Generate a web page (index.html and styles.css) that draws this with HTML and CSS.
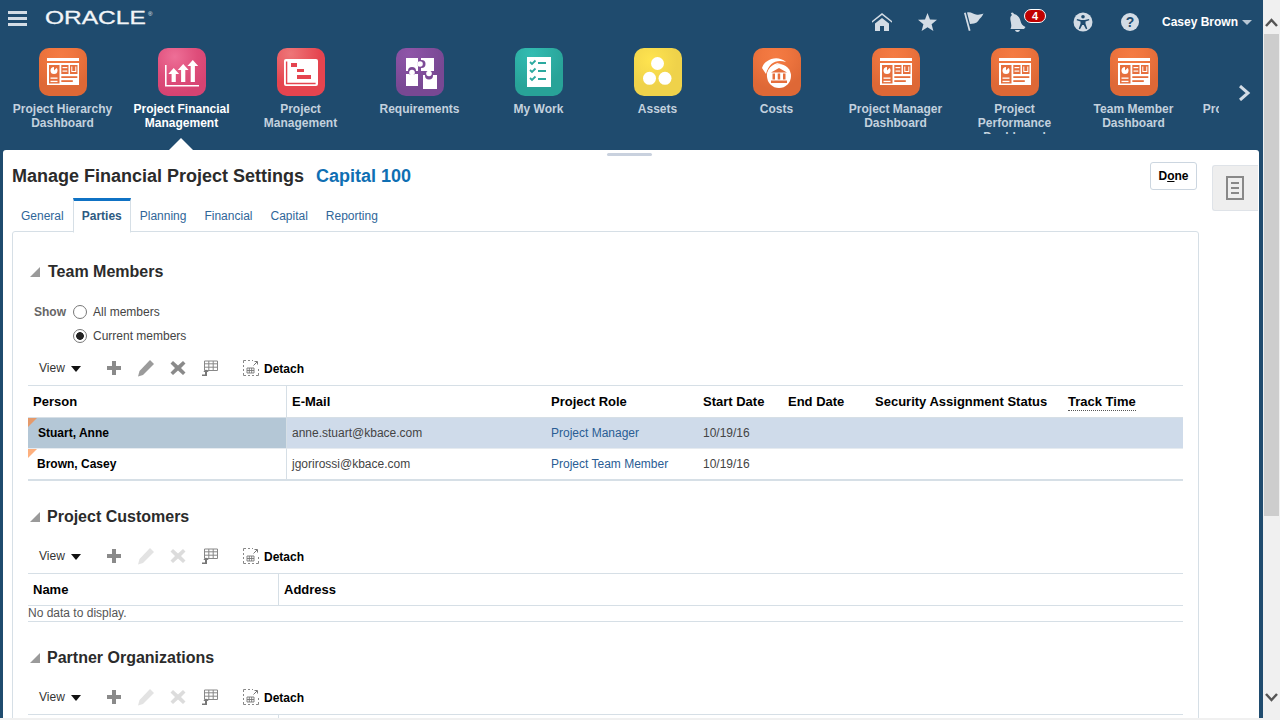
FILE: index.html

```html
<!DOCTYPE html>
<html lang="en">
<head>
  <meta charset="UTF-8" />
  <meta name="viewport" content="width=device-width, initial-scale=1" />
  <title>Manage Financial Project Settings</title>
  <link rel="stylesheet" href="styles.css">
</head>
<body>
  <svg class="defs" width="0" height="0">
    <symbol id="g-dash" viewBox="0 0 48 48">
      <rect x="8" y="10" width="32" height="3" fill="#fff"/>
      <rect x="8" y="15" width="32" height="22" fill="#fff"/>
      <rect x="10" y="17" width="10.5" height="18.5" fill="#e66f3d"/>
      <circle cx="15" cy="22.5" r="3.5" fill="#fff"/>
      <path d="M15 22.5V19h3.5z" fill="#e66f3d"/>
      <rect x="11.5" y="29.5" width="7" height="1.3" fill="#fff"/>
      <rect x="11.5" y="32.8" width="7" height="1.3" fill="#fff"/>
      <rect x="22.3" y="17" width="7.2" height="9" fill="#e66f3d"/>
      <rect x="23.5" y="19" width="4.8" height="1.2" fill="#fff"/>
      <rect x="23.5" y="22.5" width="4.8" height="1.2" fill="#fff"/>
      <rect x="31" y="17" width="7.5" height="9" fill="#e66f3d"/>
      <path d="M32.3 18.5v5.5h5v-5.5h-1v4.4h-3v-4.4z" fill="#fff"/>
      <rect x="22.3" y="28.2" width="16" height="1.8" fill="#e66f3d"/>
      <rect x="22.3" y="32.2" width="11.5" height="1.8" fill="#e66f3d"/>
    </symbol>
    <symbol id="g-fin" viewBox="0 0 48 48">
      <path d="M7 17h1.6v20H41v1.6H7z" fill="#fff"/>
      <path d="M15.7 20l5.4 6h-3.3v8h-4.2v-8h-3.3z" fill="#fff"/>
      <path d="M25.2 16l5.4 6h-3.3v12h-4.2V22h-3.3z" fill="#fff"/>
      <path d="M34.8 12l5.4 6h-3.3v16h-4.2V18h-3.3z" fill="#fff"/>
    </symbol>
    <symbol id="g-gantt" viewBox="0 0 48 48">
      <rect x="7" y="11" width="34" height="27" rx="2" fill="#fff"/>
      <path d="M9.6 13.5v22h29" fill="none" stroke="#e5444f" stroke-width="1.4"/>
      <rect x="14" y="15" width="6" height="4" fill="#e5444f"/>
      <rect x="20" y="21" width="7" height="3" fill="#e5444f"/>
      <rect x="20" y="27" width="14" height="4" fill="#e5444f"/>
    </symbol>
    <symbol id="g-puzzle" viewBox="0 0 48 48">
      <rect x="10" y="10" width="12" height="13" fill="#fff"/>
      <rect x="25" y="10" width="13" height="13" fill="#fff"/>
      <rect x="10" y="26" width="12" height="12" fill="#fff"/>
      <rect x="27" y="27" width="14" height="14" fill="#fff"/>
      <circle cx="25.500" cy="16" r="4" fill="#7c4a96"/>
      <circle cx="24" cy="16" r="2.800" fill="#fff"/>
      <circle cx="16" cy="23" r="4" fill="#7c4a96"/>
      <circle cx="16" cy="24.500" r="2.800" fill="#fff"/>
      <circle cx="33" cy="27.500" r="4" fill="#7c4a96"/>
      <circle cx="33" cy="25.500" r="2.800" fill="#fff"/>
    </symbol>
    <symbol id="g-work" viewBox="0 0 48 48">
      <rect x="12" y="9" width="24" height="30" fill="#fff"/>
      <path d="M15 14l2 2 3.500-3.500M15 22l2 2 3.500-3.500M15 30l2 2 3.500-3.500" fill="none" stroke="#2ba99f" stroke-width="1.8"/>
      <path d="M23 15h8M23 23h8M23 31h8" stroke="#2ba99f" stroke-width="1.800"/>
    </symbol>
    <symbol id="g-assets" viewBox="0 0 48 48">
      <circle cx="23.500" cy="15.500" r="6.500" fill="#fff"/>
      <circle cx="15.500" cy="30.300" r="6.500" fill="#fff"/>
      <circle cx="31" cy="30.300" r="6.500" fill="#fff"/>
    </symbol>
    <symbol id="g-costs" viewBox="0 0 48 48">
      <path d="M9 20C11 12 24 6 33 14 24 11 16 14 13 26z" fill="#fff"/>
      <path d="M14 29C13 22 20 14 28 15c-6 1-9 5-10 11z" fill="#fff"/>
      <circle cx="26" cy="28" r="12" fill="#fff"/>
      <path d="M26 20l8 4.500H18zM19.500 25.500h2.500v6h-2.500zM24.700 25.500h2.500v6h-2.500zM30 25.500h2.500v6H30zM18 32.500h16V35H18z" fill="#e66f3d"/>
    </symbol>
    <symbol id="t-freeze" viewBox="0 0 16 16">
      <path d="M2.500 1h13v9.500h-13zM2.500 3.800h13M2.500 7.200h13M6.800 1v9.500M11.200 1v9.500" fill="none" stroke="#888" stroke-width="1"/>
      <path d="M0 16v-1.500h3V12H1.200L4 9.500 6.800 12H5v4z" fill="#777"/>
    </symbol>
    <symbol id="t-detach" viewBox="0 0 16 16">
      <path d="M.5 3V.5H3M5 .5h2M.5 5v2M.5 9v2M.5 13v2.500H3M5 15.500h2M9 15.500h2M13 15.500h2.500V13M15.500 11V9M9 .5h1" fill="none" stroke="#888" stroke-width="1"/>
      <path d="M4 8h7v5H4zM4 10.500h7M6.300 8v5M8.700 8v5" fill="none" stroke="#777" stroke-width=".9"/>
      <path d="M10.500 5.500L14 2M11.500 1.500H14.500V4.500" fill="none" stroke="#777" stroke-width="1"/>
    </symbol>
  </svg>

  <div class="app">
    <header class="header">
      <div class="topbar">
        <div class="burger"><span></span><span></span><span></span></div>
        <div class="logo"><span class="logo-text">ORACLE</span><span class="logo-r">®</span></div>
        <div class="global">
          <span class="slot">
            <svg width="20" height="18" viewBox="0 0 20 18"><path d="M10 0L0 8v1.800L10 2l10 7.800V8z" fill="#d3dce5"/><path d="M3 10.500L10 5l7 5.500V18h-5v-5H8v5H3z" fill="#d3dce5"/></svg>
          </span>
          <span class="slot">
            <svg width="19" height="18" viewBox="0 0 19 18"><path d="M9.500 0l2.500 6.400 7 .4-5.400 4.400 1.800 6.800-5.900-3.800L3.600 18l1.800-6.800L0 6.800l7-.4z" fill="#d3dce5"/></svg>
          </span>
          <span class="slot">
            <svg width="20" height="19" viewBox="0 0 20 19"><path d="M0 1L1.700.5 6.500 18.500l-1.700.5z" fill="#d3dce5"/><path d="M3 .5C7-.5 9 2 12 2.500c3 .5 5 0 7.500-1C18 5 16 6 14.500 8.500 13.500 10 12 11 10 11.500L6 12z" fill="#d3dce5"/></svg>
          </span>
          <span class="slot slot-bell">
            <svg width="17" height="20" viewBox="0 0 17 20"><path d="M2 1a2 2 0 0 1 3 1c4 1 6 4 6.500 7 .5 3 2.500 5 5 6L15 17H1.500C3 14 2 11 1.500 8.500 1 6 1.500 4 3 3 2.500 2.500 2 2 2 1z" fill="#d3dce5"/><path d="M6 18h5c-.3 1.300-1.300 2-2.500 2S6.300 19.300 6 18z" fill="#d3dce5"/></svg>
            <span class="badge">4</span>
          </span>
          <span class="slot slot-gap">
            <svg width="20" height="20" viewBox="0 0 20 20"><circle cx="10" cy="10" r="9.500" fill="#d3dce5"/><circle cx="10" cy="4.800" r="1.800" fill="#1f4b6e"/><path d="M4 7l4.200.9h3.600L16 7l.3 1.300-3.800 1.200v2.300l1.800 5-1.300.5L10.800 13h-1.600l-2.200 4.300-1.300-.5 1.800-5V9.500L3.700 8.300z" fill="#1f4b6e"/></svg>
          </span>
          <span class="slot">
            <span class="help">?</span>
          </span>
          <span class="user">Casey Brown</span>
          <span class="caret"></span>
        </div>
      </div>

      <div class="springboard">
        <div class="strip">
          <div class="app-item">
            <span class="tile tile-orange"><svg class="glyph"><use href="#g-dash"/></svg></span>
            <span class="app-label">Project Hierarchy Dashboard</span>
          </div>
          <div class="app-item active">
            <span class="tile tile-pink"><svg class="glyph"><use href="#g-fin"/></svg></span>
            <span class="app-label">Project Financial Management</span>
          </div>
          <div class="app-item">
            <span class="tile tile-red"><svg class="glyph"><use href="#g-gantt"/></svg></span>
            <span class="app-label">Project Management</span>
          </div>
          <div class="app-item">
            <span class="tile tile-purple"><svg class="glyph"><use href="#g-puzzle"/></svg></span>
            <span class="app-label">Requirements</span>
          </div>
          <div class="app-item">
            <span class="tile tile-teal"><svg class="glyph"><use href="#g-work"/></svg></span>
            <span class="app-label">My Work</span>
          </div>
          <div class="app-item">
            <span class="tile tile-yellow"><svg class="glyph"><use href="#g-assets"/></svg></span>
            <span class="app-label">Assets</span>
          </div>
          <div class="app-item">
            <span class="tile tile-orange"><svg class="glyph"><use href="#g-costs"/></svg></span>
            <span class="app-label">Costs</span>
          </div>
          <div class="app-item">
            <span class="tile tile-orange"><svg class="glyph"><use href="#g-dash"/></svg></span>
            <span class="app-label">Project Manager Dashboard</span>
          </div>
          <div class="app-item">
            <span class="tile tile-orange"><svg class="glyph"><use href="#g-dash"/></svg></span>
            <span class="app-label">Project Performance Dashboard</span>
          </div>
          <div class="app-item">
            <span class="tile tile-orange"><svg class="glyph"><use href="#g-dash"/></svg></span>
            <span class="app-label">Team Member Dashboard</span>
          </div>
          <div class="app-item">
            <span class="tile tile-orange"><svg class="glyph"><use href="#g-dash"/></svg></span>
            <span class="app-label">Project Hierarchy Dashboard</span>
          </div>
        </div>
        <div class="next">
          <svg width="13" height="16" viewBox="0 0 13 16"><path d="M2 1l8 7-8 7" fill="none" stroke="#d3dce5" stroke-width="3"/></svg>
        </div>
      </div>
    </header>

    <main class="panel">
      <div class="grip"></div>
      <div class="content">
        <div class="page-head">
          <h1 class="page-title">Manage Financial Project Settings</h1>
          <span class="page-sub">Capital 100</span>
          <button class="done">D<u>o</u>ne</button>
        </div>

        <nav class="tabs">
          <a class="tab">General</a>
          <a class="tab current">Parties</a>
          <a class="tab">Planning</a>
          <a class="tab">Financial</a>
          <a class="tab">Capital</a>
          <a class="tab">Reporting</a>
        </nav>

        <div class="tab-box">
          <h2 class="section-title"><span class="disclosure"></span>Team Members</h2>

          <div class="show-row">
            <span class="show-label">Show</span>
            <span class="radio"></span>
            <span>All members</span>
          </div>
          <div class="show-row">
            <span class="show-label"></span>
            <span class="radio checked"></span>
            <span>Current members</span>
          </div>

          <div class="toolbar toolbar-first">
            <span class="view">View</span><span class="view-arrow"></span>
            <span class="tool"><svg width="16" height="16" viewBox="0 0 16 16"><path d="M6 1h4v5h5v4h-5v5H6v-5H1V6h5z" fill="#8a8a8a"/></svg></span>
            <span class="tool"><svg width="18" height="18" viewBox="0 0 18 18"><path d="M13 1l4 4L6 16l-5 1.500L2.500 12z" fill="#9b9b9b"/></svg></span>
            <span class="tool"><svg width="16" height="16" viewBox="0 0 16 16"><path d="M3 1l5 4.500L13 1l2.500 2.500L11 8l4.500 4.500L13 15l-5-4.500L3 15 .5 12.500 5 8 .5 3.500z" fill="#8a8a8a"/></svg></span>
            <span class="tool"><svg width="16" height="16"><use href="#t-freeze"/></svg></span>
            <svg class="detach-icon" width="16" height="16"><use href="#t-detach"/></svg>
            <span class="detach">Detach</span>
          </div>

          <table class="grid">
            <colgroup>
              <col class="c-person"><col class="c-mail"><col class="c-role"><col class="c-start"><col class="c-end"><col class="c-sec"><col>
            </colgroup>
            <thead>
              <tr>
                <th class="sep">Person</th><th>E-Mail</th><th>Project Role</th><th>Start Date</th><th>End Date</th><th>Security Assignment Status</th><th><span class="dotted">Track Time</span></th>
              </tr>
            </thead>
            <tbody>
              <tr class="selected">
                <td class="person sep"><span class="corner"></span>Stuart, Anne</td><td>anne.stuart@kbace.com</td><td><a class="role">Project Manager</a></td><td>10/19/16</td><td></td><td></td><td></td>
              </tr>
              <tr class="last">
                <td class="person sep"><span class="corner"></span>Brown, Casey</td><td>jgorirossi@kbace.com</td><td><a class="role">Project Team Member</a></td><td>10/19/16</td><td></td><td></td><td></td>
              </tr>
            </tbody>
          </table>

          <h2 class="section-title after-table title-p"><span class="disclosure"></span>Project Customers</h2>
          <div class="toolbar">
            <span class="view">View</span><span class="view-arrow"></span>
            <span class="tool"><svg width="16" height="16" viewBox="0 0 16 16"><path d="M6 1h4v5h5v4h-5v5H6v-5H1V6h5z" fill="#8a8a8a"/></svg></span>
            <span class="tool"><svg width="18" height="18" viewBox="0 0 18 18"><path d="M13 1l4 4L6 16l-5 1.500L2.500 12z" fill="#e3e3e3"/></svg></span>
            <span class="tool"><svg width="16" height="16" viewBox="0 0 16 16"><path d="M3 1l5 4.500L13 1l2.500 2.500L11 8l4.500 4.500L13 15l-5-4.500L3 15 .5 12.500 5 8 .5 3.500z" fill="#dcdcdc"/></svg></span>
            <span class="tool"><svg width="16" height="16"><use href="#t-freeze"/></svg></span>
            <svg class="detach-icon" width="16" height="16"><use href="#t-detach"/></svg>
            <span class="detach">Detach</span>
          </div>
          <table class="grid">
            <colgroup><col class="c-name"><col></colgroup>
            <thead><tr><th class="sep">Name</th><th>Address</th></tr></thead>
            <tbody><tr><td class="empty" colspan="2">No data to display.</td></tr></tbody>
          </table>

          <h2 class="section-title after-table title-p"><span class="disclosure"></span>Partner Organizations</h2>
          <div class="toolbar">
            <span class="view">View</span><span class="view-arrow"></span>
            <span class="tool"><svg width="16" height="16" viewBox="0 0 16 16"><path d="M6 1h4v5h5v4h-5v5H6v-5H1V6h5z" fill="#8a8a8a"/></svg></span>
            <span class="tool"><svg width="18" height="18" viewBox="0 0 18 18"><path d="M13 1l4 4L6 16l-5 1.500L2.500 12z" fill="#e3e3e3"/></svg></span>
            <span class="tool"><svg width="16" height="16" viewBox="0 0 16 16"><path d="M3 1l5 4.500L13 1l2.500 2.500L11 8l4.500 4.500L13 15l-5-4.500L3 15 .5 12.500 5 8 .5 3.500z" fill="#dcdcdc"/></svg></span>
            <span class="tool"><svg width="16" height="16"><use href="#t-freeze"/></svg></span>
            <svg class="detach-icon" width="16" height="16"><use href="#t-detach"/></svg>
            <span class="detach">Detach</span>
          </div>
          <table class="grid">
            <colgroup><col class="c-name"><col></colgroup>
            <thead><tr><th class="sep"></th><th></th></tr></thead>
          </table>
        </div>
      </div>

      <aside class="side">
        <div class="side-tab">
          <svg width="18" height="24" viewBox="0 0 18 24"><path d="M1 1h16v22H1z" fill="none" stroke="#888" stroke-width="2"/><path d="M5 7h8M5 12h8M5 17h8" stroke="#888" stroke-width="2"/></svg>
        </div>
      </aside>
    </main>
  </div>

  <div class="scrollbar">
    <div class="scroll-btn scroll-up"><svg width="13" height="9" viewBox="0 0 13 9"><path d="M1 8l5.500-6L12 8" fill="none" stroke="#555" stroke-width="2.500"/></svg></div>
    <div class="scroll-thumb"></div>
    <div class="scroll-rest"></div>
    <div class="scroll-btn"><svg width="13" height="9" viewBox="0 0 13 9"><path d="M1 1l5.500 6L12 1" fill="none" stroke="#555" stroke-width="2.500"/></svg></div>
  </div>
</body>
</html>
```

FILE: styles.css

```css
html, body {
  height: 100%;
}
body {
  margin: 0;
  display: flex;
  height: 720px;
  overflow: hidden;
  background-color: #f0f0f0;
  font-family: "Liberation Sans", Arial, sans-serif;
  font-size: 12px;
  color: #444;
}
.defs {
  position: absolute;
}

.app {
  width: 1263px;
  height: 718px;
  flex: none;
  display: flex;
  flex-direction: column;
  background-color: #1f4b6e;
}

/* header */
.header {
  height: 150px;
  flex: none;
}
.topbar {
  height: 40px;
  display: flex;
  align-items: center;
  padding: 0 11px 0 8px;
  box-sizing: border-box;
}
.burger {
  display: flex;
  flex-direction: column;
  gap: 3px;
  width: 19px;
  margin-top: -4px;
}
.burger span {
  height: 3px;
  background-color: #d3dce5;
}
.logo {
  width: 110px;
  margin-left: 18px;
  margin-top: -5px;
  display: flex;
  color: #f2f5f8;
}
.logo-text {
  display: inline-block;
  width: 103px;
  font-size: 19px;
  line-height: 18px;
  -webkit-text-stroke: 0.3px #f2f5f8;
  transform: scaleX(1.29);
  transform-origin: left center;
}
.logo-r {
  font-size: 6px;
  line-height: 10px;
}
.global {
  margin-left: auto;
  display: flex;
  align-items: center;
}
.slot {
  position: relative;
  width: 46px;
  height: 40px;
  display: flex;
  align-items: center;
  justify-content: center;
  margin-top: 3px;
}
.slot-gap {
  margin-left: 18px;
}
.slot-gap svg {
  margin-left: -2px;
}
.slot-bell svg {
  margin-left: -4px;
}
.badge {
  position: absolute;
  left: 27px;
  top: 7px;
  width: 22px;
  height: 14px;
  box-sizing: border-box;
  border: 1px solid #fff;
  border-radius: 7px;
  background-color: #c00000;
  color: #fff;
  font-size: 11px;
  font-weight: bold;
  line-height: 12px;
  text-align: center;
}
.help {
  width: 18px;
  height: 18px;
  border-radius: 50%;
  background-color: #d3dce5;
  color: #1f4b6e;
  font-size: 14px;
  font-weight: bold;
  line-height: 18px;
  text-align: center;
}
.user {
  margin-left: 9px;
  color: #fff;
  font-weight: bold;
  margin-top: 3px;
}
.caret {
  width: 0;
  height: 0;
  margin: 4px 0 0 4px;
  border-left: 5px solid transparent;
  border-right: 5px solid transparent;
  border-top: 5px solid #b9c7d4;
}

/* app icons */
.springboard {
  display: flex;
  margin-top: 8px;
  height: 102px;
}
.strip {
  width: 1219px;
  flex: none;
  display: flex;
  padding-left: 3px;
  box-sizing: border-box;
  overflow: hidden;
}
.app-item {
  position: relative;
  width: 119px;
  flex: none;
  display: flex;
  flex-direction: column;
  align-items: center;
  height: 102px;
}
.tile {
  width: 48px;
  height: 48px;
  flex: none;
  border-radius: 10px;
  margin-bottom: 6px;
}
.glyph {
  display: block;
  width: 48px;
  height: 48px;
}
.tile-orange {
  background: radial-gradient(circle at 45% 15%, #f47b43 0, #f0763f 25%, #de6836 70%);
}
.tile-pink {
  background: radial-gradient(circle at 35% 18%, #ee6f97 0, #de4d7a 45%, #d64372 75%);
}
.tile-red {
  background: radial-gradient(circle at 28% 12%, #ee7678 0, #e5444f 55%);
}
.tile-purple {
  background: radial-gradient(circle at 28% 12%, #8f55a8 0, #784893 65%);
}
.tile-teal {
  background: radial-gradient(circle at 35% 12%, #33bcb2 0, #28a398 65%);
}
.tile-yellow {
  background: radial-gradient(circle at 35% 25%, #ffe44f 0, #efd24a 55%);
}
.app-label {
  display: block;
  width: 111px;
  height: 32px;
  overflow: hidden;
  color: #c3d1de;
  font-weight: bold;
  line-height: 14px;
  text-align: center;
}
.active .app-label {
  color: #fff;
}
.active::after {
  content: "";
  position: absolute;
  left: 47px;
  bottom: 0;
  width: 0;
  height: 0;
  border-left: 12px solid transparent;
  border-right: 12px solid transparent;
  border-bottom: 12px solid #fff;
}
.next {
  flex: 1;
  display: flex;
  justify-content: center;
  padding-top: 37px;
  padding-left: 7px;
  box-sizing: border-box;
}

/* main panel */
.panel {
  position: relative;
  flex: 1;
  min-height: 0;
  margin: 0 4px 0 3px;
  display: flex;
  overflow: hidden;
  background-color: #fff;
  border-radius: 3px 3px 0 0;
}
.grip {
  position: absolute;
  left: 604px;
  top: 3px;
  width: 45px;
  height: 3px;
  border-radius: 2px;
  background-color: #c9d1de;
}
.content {
  width: 1196px;
  flex: none;
  padding: 12px 0 0 9px;
  box-sizing: border-box;
}
.page-head {
  display: flex;
  align-items: center;
  height: 28px;
  padding-right: 2px;
}
.page-title {
  margin: 0;
  font-size: 18px;
  font-weight: bold;
  color: #2b2b2b;
}
.page-sub {
  margin-left: 12px;
  font-size: 18px;
  font-weight: bold;
  color: #0f6fb3;
}
.done {
  margin-left: auto;
  width: 47px;
  height: 28px;
  padding: 0;
  border: 1px solid #ccd6e0;
  border-radius: 3px;
  background-color: #fff;
  color: #000;
  font-family: inherit;
  font-size: 12px;
  font-weight: bold;
}
.tabs {
  display: flex;
  height: 33px;
  margin-top: 8px;
}
.tab {
  padding: 4px 9px 0;
  line-height: 29px;
  color: #2f6699;
}
.current {
  position: relative;
  z-index: 1;
  height: 30px;
  padding: 1px 8px 0;
  border: 1px solid #d6dfe6;
  border-top: 3px solid #0f72c4;
  border-bottom: 1px solid #fff;
  background-color: #fff;
  font-weight: bold;
  color: #2d5a82;
}
.tab-box {
  position: relative;
  height: 600px;
  padding: 30px 15px 0;
  border: 1px solid #d6dfe6;
  border-radius: 3px;
}
.section-title {
  display: flex;
  align-items: center;
  height: 20px;
  margin: 0;
  font-size: 16px;
  font-weight: bold;
  color: #2b2b2b;
}
.after-table {
  margin-top: 26px;
}
.title-p .disclosure {
  margin-right: 7px;
}
.disclosure {
  width: 0;
  height: 0;
  margin: 0 8px 0 2px;
  border-left: 10px solid transparent;
  border-bottom: 10px solid #9a9a9a;
}
.show-row {
  display: flex;
  align-items: center;
  height: 24px;
  padding-left: 6px;
}
.section-title + .show-row {
  margin-top: 18px;
}
.show-label {
  width: 39px;
  font-weight: bold;
  color: #666;
}
.radio {
  width: 14px;
  height: 14px;
  margin-right: 6px;
  box-sizing: border-box;
  border: 1px solid #777;
  border-radius: 50%;
  background-color: #fff;
}
.checked {
  background: radial-gradient(circle, #222 0, #222 3.5px, #fff 4.2px);
}
.toolbar {
  display: flex;
  align-items: center;
  height: 34px;
  margin-top: 12px;
  padding-left: 11px;
  color: #333;
}
.toolbar-first {
  margin-top: 3px;
}
.view {
  width: 27px;
}
.view-arrow {
  width: 0;
  height: 0;
  margin: 2px 17px 0 5px;
  border-left: 5px solid transparent;
  border-right: 5px solid transparent;
  border-top: 6px solid #111;
}
.tool {
  width: 32px;
  display: flex;
  justify-content: center;
}
.detach-icon {
  margin-left: 17px;
}
.detach {
  margin: 1px 0 0 5px;
  font-weight: bold;
  color: #000;
}

/* tables */
.grid {
  width: 1155px;
  table-layout: fixed;
  border-collapse: separate;
  border-spacing: 0;
  border-top: 1px solid #d6dfe6;
}
.c-person, .c-mail {
  width: 259px;
}
.c-role {
  width: 152px;
}
.c-start {
  width: 85px;
}
.c-end {
  width: 87px;
}
.c-sec {
  width: 193px;
}
.c-name {
  width: 251px;
}
.grid th {
  height: 31px;
  padding: 0 5px;
  border-bottom: 1px solid #d6dfe6;
  text-align: left;
  font-size: 13px;
  font-weight: bold;
  color: #000;
  white-space: nowrap;
}
.grid th.sep, .grid td.sep {
  border-right: 1px solid #d6dfe6;
}
.grid td {
  height: 30px;
  padding: 0 5px;
  border-bottom: 1px solid #e6ebf0;
  white-space: nowrap;
}
.grid .last td {
  border-bottom: 2px solid #d6dfe6;
}
.selected td {
  background-color: #cfdbea;
}
.grid .selected .person {
  background-color: #b4c7d6;
}
.grid .person {
  position: relative;
  padding-left: 10px;
  font-weight: bold;
  color: #000;
}
.grid .last .person {
  padding-left: 9px;
}
.corner {
  position: absolute;
  left: 0;
  top: 0;
  width: 0;
  height: 0;
  border-top: 9px solid #fdb07e;
  border-right: 9px solid transparent;
}
.selected .corner {
  border-top-color: #e59a6b;
}
.role {
  color: #2a5d94;
}
.dotted {
  padding-bottom: 1px;
  border-bottom: 1px dotted #555;
}
.grid .empty {
  height: 15px;
  padding: 0;
  border-bottom: 1px solid #d6dfe6;
  font-size: 12px;
  line-height: 13px;
  color: #555;
}

/* side tab */
.side {
  flex: 1;
  padding: 15px 1px 0 13px;
}
.side-tab {
  height: 46px;
  display: flex;
  align-items: center;
  justify-content: center;
  box-sizing: border-box;
  padding-right: 2px;
  border: 1px solid #dfe3e8;
  border-right: none;
  border-radius: 3px 0 0 3px;
  background-color: #eee;
}

/* scrollbar */
.scrollbar {
  width: 17px;
  height: 720px;
  flex: none;
  display: flex;
  flex-direction: column;
  background-color: #f0f0f0;
}
.scroll-btn {
  height: 46px;
  flex: none;
  display: flex;
  align-items: center;
  justify-content: center;
}
.scroll-up {
  height: 34px;
  padding-top: 10px;
  box-sizing: border-box;
}
.scroll-thumb {
  height: 482px;
  margin-left: 1px;
  margin-right: 1px;
  background-color: #cdcdcd;
}
.scroll-rest {
  flex: 1;
}
```
